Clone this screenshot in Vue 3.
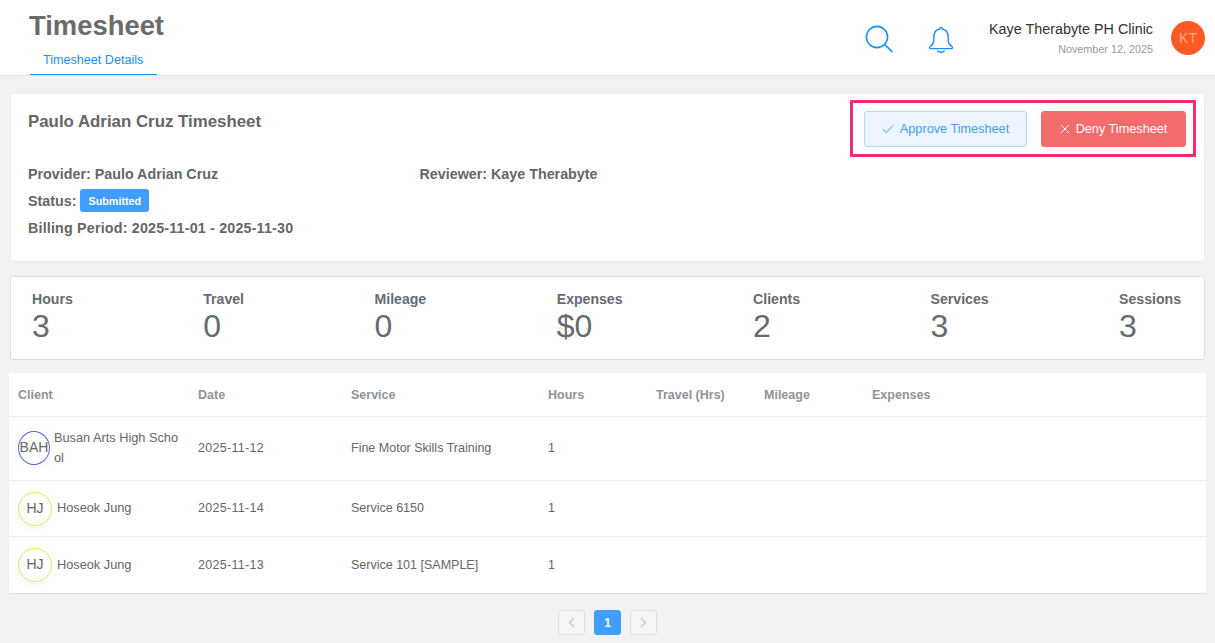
<script setup>
const stats = [
  { label: 'Hours', value: '3' },
  { label: 'Travel', value: '0' },
  { label: 'Mileage', value: '0' },
  { label: 'Expenses', value: '$0' },
  { label: 'Clients', value: '2' },
  { label: 'Services', value: '3' },
  { label: 'Sessions', value: '3' }
]
const rows = [
  { initials: 'BAH', tone: 'blue', client: 'Busan Arts High School', date: '2025-11-12', service: 'Fine Motor Skills Training', hours: '1', tall: true },
  { initials: 'HJ', tone: 'yellow', client: 'Hoseok Jung', date: '2025-11-14', service: 'Service 6150', hours: '1' },
  { initials: 'HJ', tone: 'yellow', client: 'Hoseok Jung', date: '2025-11-13', service: 'Service 101 [SAMPLE]', hours: '1' }
]
</script>

<template>
  <div class="page">
    <header class="topbar">
      <div class="title-block">
        <h1 class="title">Timesheet</h1>
        <div class="tab">Timesheet Details</div>
      </div>
      <div class="top-right">
        <svg class="icon search" width="30" height="30" viewBox="0 0 30 30" fill="none" stroke="#1890ff" stroke-width="1.6">
          <circle cx="13" cy="13" r="10.6" />
          <path d="M20.8 20.6 L28 27.6" stroke-linecap="round" />
        </svg>
        <svg class="icon bell" width="26" height="28" viewBox="0 0 26 28" fill="none" stroke="#1890ff" stroke-width="1.4" stroke-linejoin="round" stroke-linecap="round">
          <path d="M13 1.5 C13.8 1.5 14.2 2.2 14.2 3 C18.4 3.8 20.2 7 20.2 11 L20.2 15 C20.2 17.6 22.2 19 24.2 20.8 C24.8 21.6 24.4 22.6 23.4 22.6 L2.6 22.6 C1.6 22.6 1.2 21.6 1.8 20.8 C3.8 19 5.8 17.6 5.8 15 L5.8 11 C5.8 7 7.6 3.8 11.8 3 C11.8 2.2 12.2 1.5 13 1.5 Z" />
          <path d="M9.8 25 C11 26.6 15 26.6 16.2 25" />
        </svg>
        <div class="user">
          <div class="user-name">Kaye Therabyte PH Clinic</div>
          <div class="user-date">November 12, 2025</div>
        </div>
        <div class="user-avatar">KT</div>
      </div>
    </header>

    <main class="content">
      <section class="card info">
        <div class="info-head">
          <h2 class="info-title">Paulo Adrian Cruz Timesheet</h2>
          <div class="actions">
            <button class="btn approve">
              <svg width="12" height="10" viewBox="0 0 12 10" fill="none" stroke="#409eff" stroke-width="1"><path d="M1 5.2 L4.2 8.6 L11 1.4" /></svg>
              Approve Timesheet
            </button>
            <button class="btn deny">
              <svg width="10" height="10" viewBox="0 0 10 10" fill="none" stroke="#fff" stroke-width="1"><path d="M1 1 L9 9 M9 1 L1 9" /></svg>
              Deny Timesheet
            </button>
          </div>
        </div>
        <div class="info-grid">
          <div class="info-col">
            <div class="info-line">Provider: Paulo Adrian Cruz</div>
            <div class="info-line">Status: <span class="badge">Submitted</span></div>
            <div class="info-line billing">Billing Period: 2025-11-01 - 2025-11-30</div>
          </div>
          <div class="info-col">
            <div class="info-line">Reviewer: Kaye Therabyte</div>
          </div>
        </div>
      </section>

      <section class="card stats">
        <div v-for="s in stats" :key="s.label" class="stat">
          <div class="stat-label">{{ s.label }}</div>
          <div class="stat-value">{{ s.value }}</div>
        </div>
      </section>

      <section class="table">
        <div class="row head">
          <div class="c-client">Client</div>
          <div class="c-date">Date</div>
          <div class="c-service">Service</div>
          <div class="c-hours">Hours</div>
          <div class="c-travel">Travel (Hrs)</div>
          <div class="c-mileage">Mileage</div>
          <div class="c-expenses">Expenses</div>
        </div>
        <div v-for="(r, i) in rows" :key="i" class="row body" :class="{ tall: r.tall, last: i === 2 }">
          <div class="c-client client">
            <span class="avatar" :class="r.tone">{{ r.initials }}</span>
            <span class="client-name">{{ r.client }}</span>
          </div>
          <div class="c-date cell date">{{ r.date }}</div>
          <div class="c-service cell">{{ r.service }}</div>
          <div class="c-hours cell">{{ r.hours }}</div>
          <div class="c-travel"></div>
          <div class="c-mileage"></div>
          <div class="c-expenses"></div>
        </div>
      </section>

      <nav class="pager">
        <button class="pg">
          <svg width="7" height="11" viewBox="0 0 7 11" fill="none" stroke="#c0c4cc" stroke-width="1.2"><path d="M6 1 L1.5 5.5 L6 10" /></svg>
        </button>
        <button class="pg current">1</button>
        <button class="pg">
          <svg width="7" height="11" viewBox="0 0 7 11" fill="none" stroke="#c0c4cc" stroke-width="1.2"><path d="M1 1 L5.5 5.5 L1 10" /></svg>
        </button>
      </nav>
    </main>
  </div>
</template>

<style>
html, body { margin: 0; background: #f2f2f2; }
</style>

<style scoped>
.page {
  width: 1215px;
  height: 643px;
  overflow: hidden;
  background: #f2f2f2;
  font-family: "Liberation Sans", Arial, sans-serif;
  color: #666;
}
.topbar {
  height: 75px;
  background: #fff;
  border-bottom: 1px solid #e4e4e4;
  display: flex;
  justify-content: space-between;
  padding: 0 10px 0 29px;
}
.title-block { display: flex; flex-direction: column; align-items: flex-start; }
.title {
  margin: 9px 0 0;
  font-size: 27.4px;
  line-height: 34px;
  font-weight: 700;
  color: #6b6b6b;
}
.tab {
  margin-top: 4px;
  height: 28px;
  line-height: 26px;
  padding: 0 14px 0 13px;
  margin-left: 1px;
  font-size: 12.6px;
  color: #1890ff;
  border-bottom: 1px solid #1890ff;
  box-sizing: border-box;
}
.top-right { display: flex; align-items: flex-start; }
.icon { display: block; flex: none; }
.search { margin-top: 24px; }
.bell { margin: 26px 0 0 34px; }
.user { margin: 20px 18px 0 35px; text-align: right; }
.user-name { font-size: 14.35px; line-height: 18px; color: #333; }
.user-date { font-size: 10.8px; line-height: 14px; margin-top: 4px; color: #999; }
.user-avatar {
  width: 34px;
  height: 34px;
  margin-top: 21px;
  border-radius: 50%;
  background: #ff5a26;
  color: #f7a98a;
  font-size: 14px;
  line-height: 34px;
  text-align: center;
}
.content { padding: 17px 10px 0; }
.card {
  background: #fff;
  border-radius: 3px;
  box-sizing: border-box;
}
.info {
  height: 169px;
  border: 1px solid #ececec;
  padding: 0 8px 0 17px;
}
.info-head { display: flex; justify-content: space-between; align-items: flex-start; }
.info-title {
  margin: 18px 0 0;
  font-size: 16.85px;
  line-height: 20px;
  font-weight: 700;
  color: #666;
}
.actions {
  margin-top: 6px;
  border: 3px solid #f72a6e;
  width: 346px;
  height: 57px;
  box-sizing: border-box;
  padding: 8px 7px 0 11px;
  display: flex;
  gap: 14px;
  border-radius: 1px;
}
.btn {
  height: 36px;
  padding: 0;
  border-radius: 3px;
  font-family: inherit;
  font-size: 12.7px;
  display: flex;
  align-items: center;
  justify-content: center;
  gap: 6px;
}
.approve {
  width: 163px;
  background: #ecf5ff;
  border: 1px solid #b3d8ff;
  color: #409eff;
}
.deny {
  width: 145px;
  background: #f56c6c;
  border: 1px solid #f56c6c;
  color: #fff;
}
.info-grid { display: flex; margin-top: 4px; }
.info-col { width: 391.5px; }
.info-line {
  font-size: 14.3px;
  font-weight: 700;
  line-height: 26px;
  color: #666;
  white-space: nowrap;
}
.info-line + .info-line { margin-top: 1px; }
.billing { letter-spacing: 0.18px; }
.badge {
  display: inline-block;
  vertical-align: middle;
  height: 23px;
  line-height: 25px;
  padding: 0 8px;
  background: #409eff;
  border-radius: 3px;
  color: #fff;
  font-size: 10.8px;
  margin: -4px 0 0 0;
}
.stats {
  margin-top: 14px;
  height: 84px;
  border: 1px solid #dedede;
  padding: 13px 23px 0 21px;
  display: flex;
  justify-content: space-between;
}
.stat-label { font-size: 14.1px; font-weight: 700; line-height: 18px; color: #666b70; }
.stat-value { font-size: 32px; line-height: 36px; color: #666b70; }
.table {
  margin-top: 13px;
  margin-left: -1px;
  margin-right: -1px;
  background: #fff;
}
.row { display: flex; align-items: center; font-size: 12.5px; color: #666; box-sizing: border-box; }
.row > div { flex: none; box-sizing: border-box; padding-left: 9px; }
.row.head {
  height: 44px;
  border-bottom: 1px solid #ebeef5;
  font-weight: 700;
  color: #909399;
}
.row.body { height: 56px; border-bottom: 1px solid #ebeef5; }
.row.body.tall { height: 64px; }
.row.body.last { height: 57px; border-bottom-color: #dcdcdc; }
.cell { margin-top: -1px; }
.date { letter-spacing: 0.3px; }
.c-client { width: 180px; }
.c-date { width: 153px; padding-left: 9px; }
.c-service { width: 197px; }
.c-hours { width: 108px; }
.c-travel { width: 108px; }
.c-mileage { width: 108px; }
.c-expenses { width: 108px; }
.client { display: flex; align-items: center; }
.avatar {
  flex: none;
  width: 32px;
  height: 32px;
  border-radius: 50%;
  border: 1px solid;
  box-sizing: content-box;
  text-align: center;
  line-height: 30px;
  font-size: 14px;
  white-space: nowrap;
  overflow: visible;
  box-shadow: 0 2px 8px rgba(0, 0, 0, 0.04);
}
.avatar.blue { border-color: #5468d4; width: 30px; margin-right: 4px; margin-top: -2px; }
.avatar.yellow { border-color: #e4e94a; margin-right: 5px; }
.client-name {
  width: 126px;
  font-size: 12.75px;
  line-height: 20px;
  word-break: break-all;
  margin-top: -2px;
}
.last .client-name { margin-top: 0; }
.pager { display: flex; justify-content: center; gap: 9px; margin-top: 16px; }
.pg {
  width: 27px;
  height: 25px;
  padding: 0;
  background: #f5f5f5;
  border: 1px solid #dedede;
  border-radius: 3px;
  display: flex;
  align-items: center;
  justify-content: center;
  font-family: inherit;
  font-size: 12px;
  font-weight: 700;
}
.pg.current { background: #409eff; border-color: #409eff; color: #fff; }
</style>
